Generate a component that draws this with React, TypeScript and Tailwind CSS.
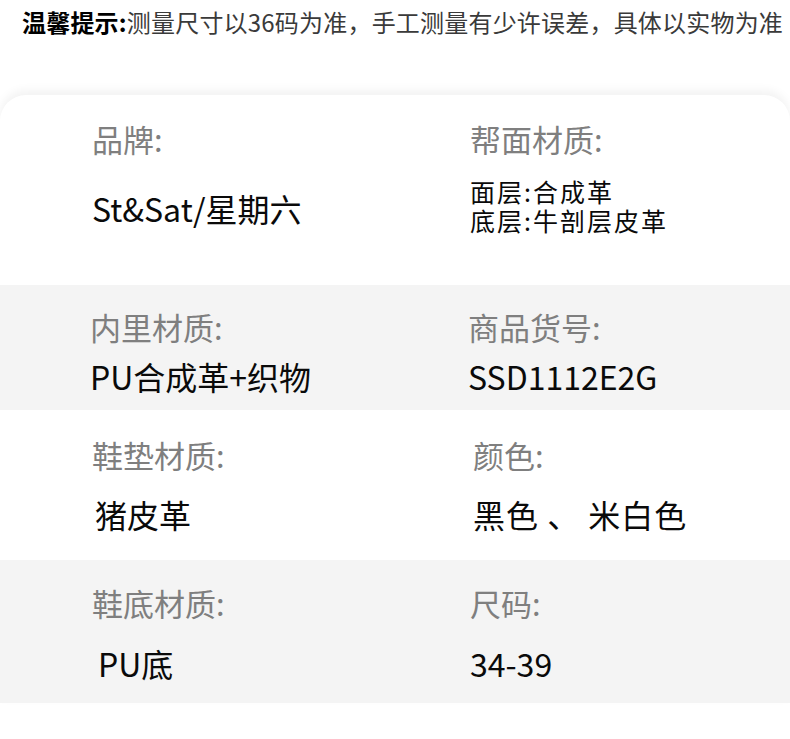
import React from 'react'

const font = { fontFamily: '"Noto Sans CJK SC", "Noto Sans", sans-serif' }

const Label = ({ children }: { children: React.ReactNode }) => (
  <div className="text-[31px] leading-[36px] text-[#7f7f7f]">{children}</div>
)

const Value = ({ children, className = '' }: { children: React.ReactNode; className?: string }) => (
  <div className={`text-[32px] leading-[36px] text-[#0a0a0a] ${className}`}>{children}</div>
)

const App = () => {
  return (
    <div className="w-[790px] h-[739px] bg-white overflow-hidden" style={font}>
      {/* Notice */}
      <div className="pl-[22px] pt-[6px] text-[24px] leading-[32px] tracking-[0.2px] whitespace-nowrap text-[#3a3a3a]">
        <span className="font-bold text-black">温馨提示:</span>测量尺寸以36码为准，手工测量有少许误差，具体以实物为准
      </div>

      {/* Spec card */}
      <div className="mt-[57px] rounded-t-[26px] bg-white shadow-[0_-5px_10px_rgba(0,0,0,0.05)]">
        {/* Row 1 */}
        <div className="grid grid-cols-[378px_1fr] h-[190px] pl-[92px] pt-[26px]">
          <div className="flex flex-col">
            <Label>品牌:</Label>
            <Value className="mt-[33px]">St&amp;Sat/星期六</Value>
          </div>
          <div className="flex flex-col">
            <Label>帮面材质:</Label>
            <div className="mt-[20px] text-[25px] leading-[29px] tracking-[2px] text-[#0a0a0a]">
              <div>面层:合成革</div>
              <div>底层:牛剖层皮革</div>
            </div>
          </div>
        </div>

        {/* Row 2 */}
        <div className="grid grid-cols-[378px_1fr] h-[125px] pl-[90px] pt-[24px] bg-[#f4f4f4]">
          <div className="flex flex-col">
            <Label>内里材质:</Label>
            <Value className="mt-[13px]">PU合成革+织物</Value>
          </div>
          <div className="flex flex-col">
            <Label>商品货号:</Label>
            <Value className="mt-[13px]">SSD1112E2G</Value>
          </div>
        </div>

        {/* Row 3 */}
        <div className="grid grid-cols-[378px_1fr] h-[150px] pl-[92px] pt-[27px]">
          <div className="flex flex-col">
            <Label>鞋垫材质:</Label>
            <Value className="mt-[23px] pl-[3px]">猪皮革</Value>
          </div>
          <div className="flex flex-col pl-[3px]">
            <Label>颜色:</Label>
            <Value className="mt-[23px] tracking-[1px]">黑色 、 米白色</Value>
          </div>
        </div>

        {/* Row 4 */}
        <div className="grid grid-cols-[378px_1fr] h-[143px] pl-[92px] pt-[25px] bg-[#f4f4f4]">
          <div className="flex flex-col">
            <Label>鞋底材质:</Label>
            <Value className="mt-[24px] pl-[6px]">PU底</Value>
          </div>
          <div className="flex flex-col">
            <Label>尺码:</Label>
            <Value className="mt-[24px]">34-39</Value>
          </div>
        </div>
      </div>
    </div>
  )
}

export default App
